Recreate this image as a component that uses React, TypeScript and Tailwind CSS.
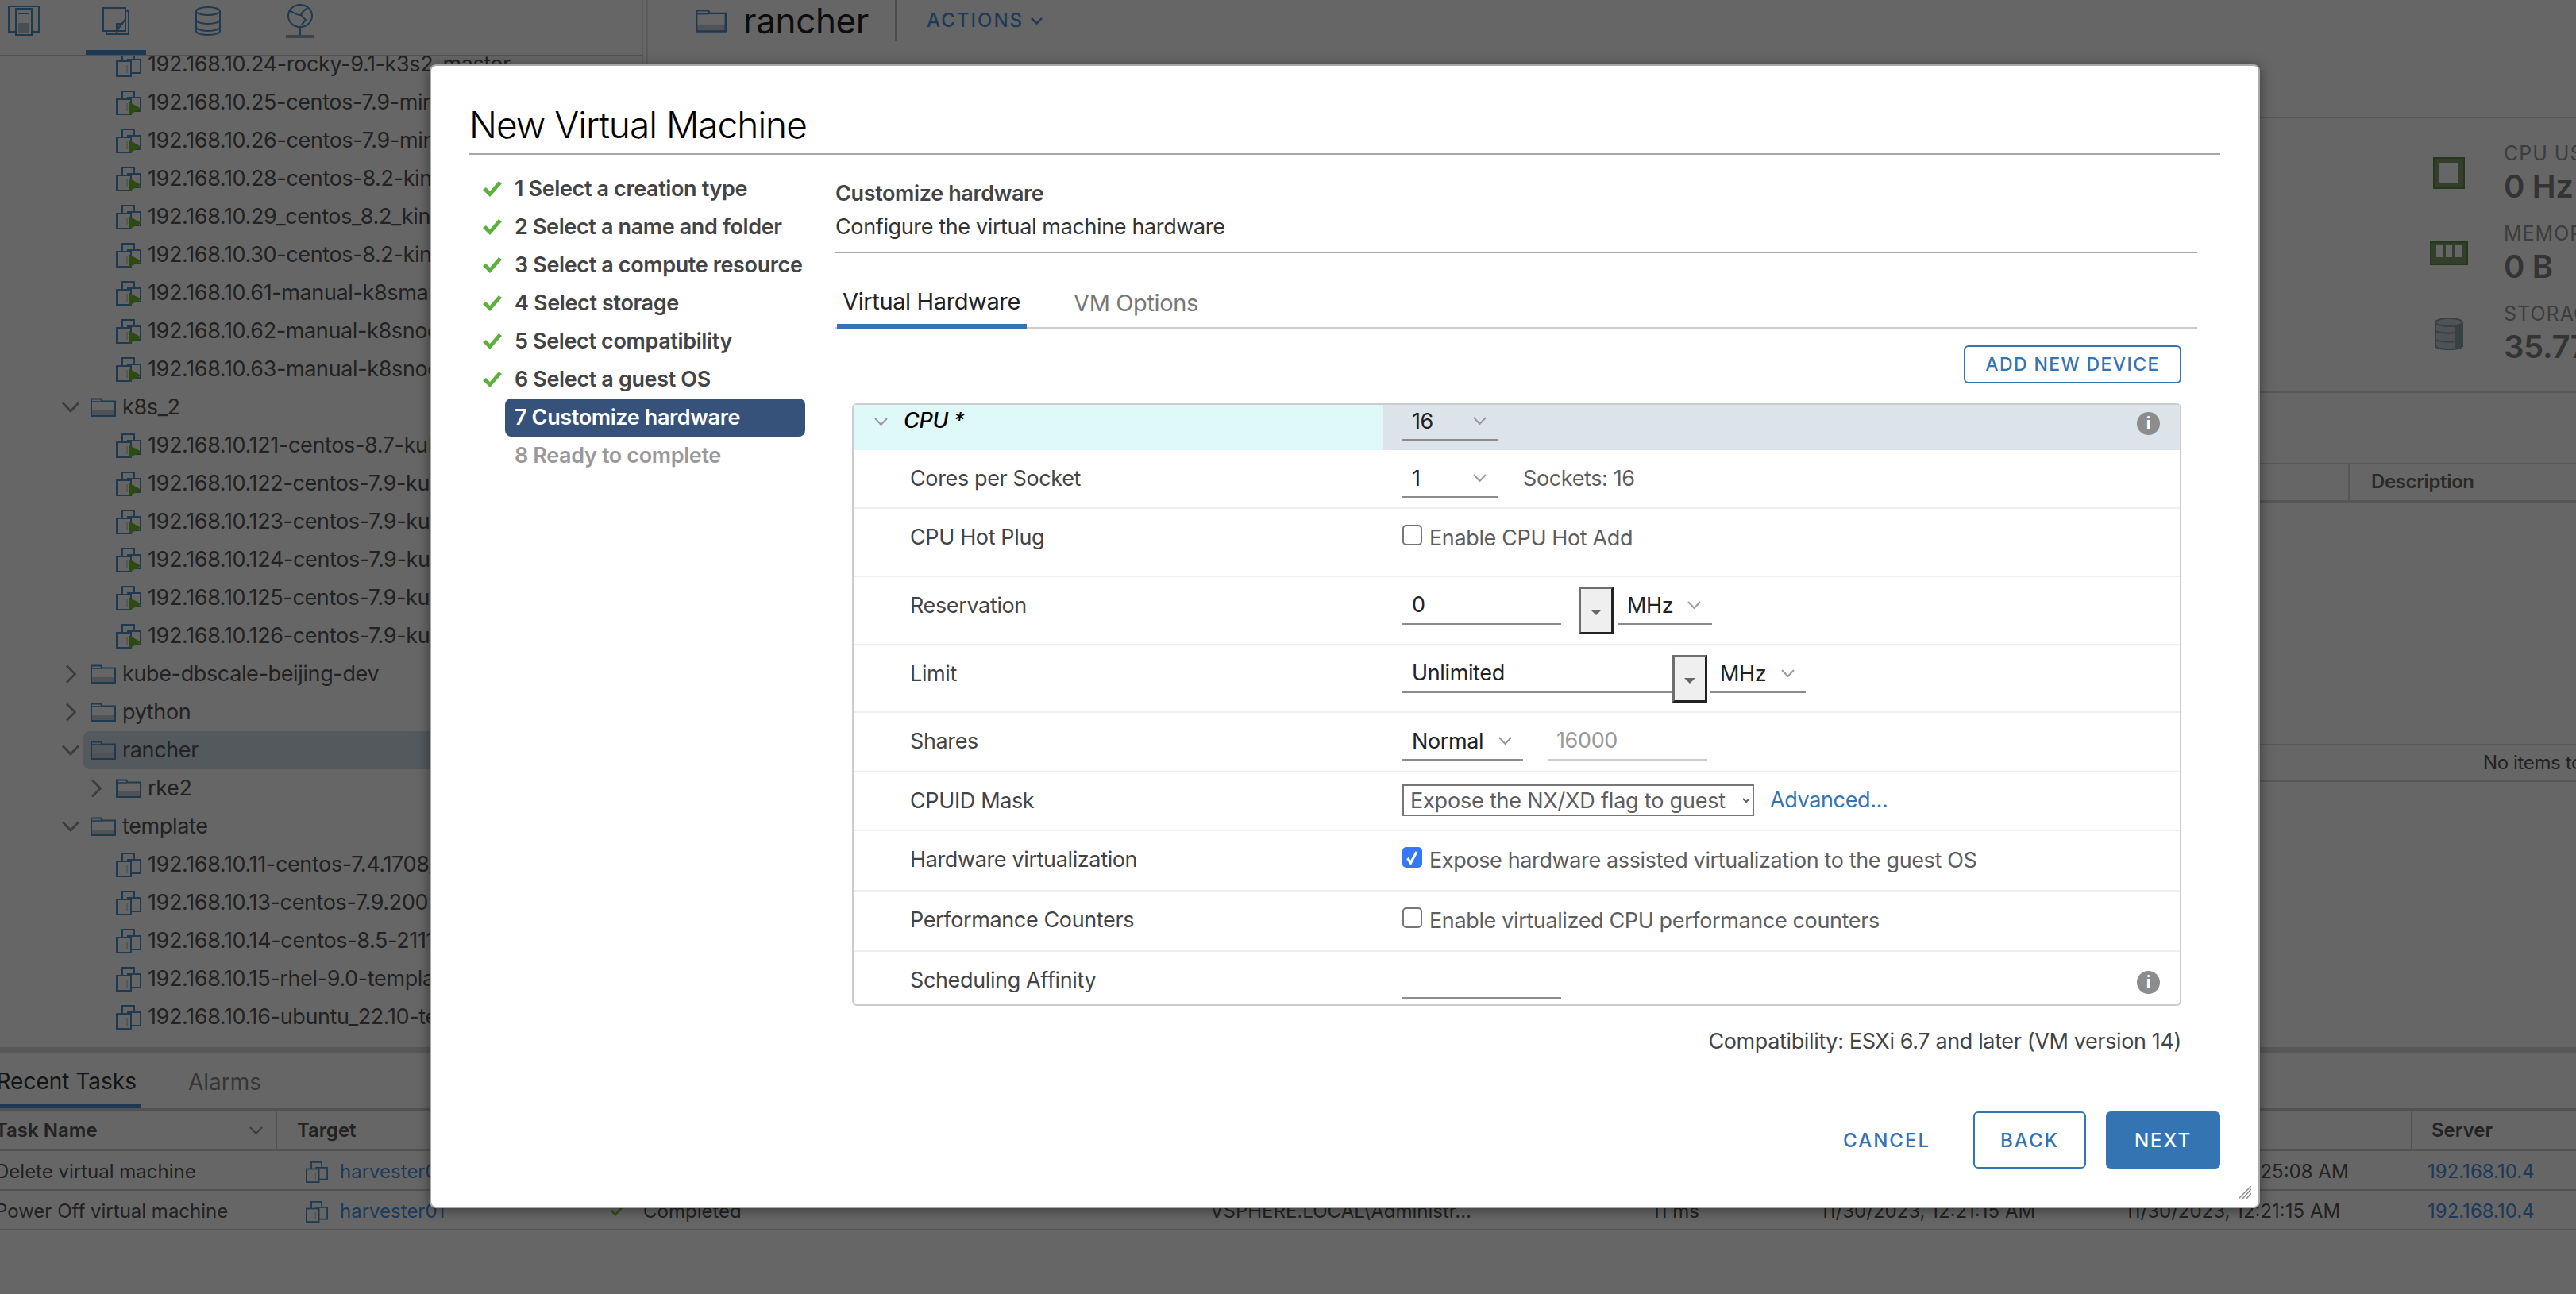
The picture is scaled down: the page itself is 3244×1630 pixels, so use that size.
import React from 'react';

const Chevron: React.FC<{ dir: 'down' | 'right'; className?: string }> = ({ dir, className = 'stroke-[#999]' }) =>
  dir === 'down' ? (
    <svg width="22" height="14" viewBox="0 0 22 14" fill="none" className={className} strokeWidth="3">
      <path d="M1 1.5 11 12 21 1.5" />
    </svg>
  ) : (
    <svg width="14" height="24" viewBox="0 0 14 24" fill="none" className={className} strokeWidth="3">
      <path d="M2 1.5 12.5 12 2 22.5" />
    </svg>
  );

const SmallChevron: React.FC = () => (
  <svg width="17" height="10" viewBox="0 0 17 10" fill="none" stroke="#999" strokeWidth="2">
    <path d="M1 1 8.5 9 16 1" />
  </svg>
);

const VmIcon: React.FC<{ on?: boolean; size?: number }> = ({ on, size = 32 }) => (
  <svg width={size} height={size} viewBox="0 0 32 32" fill="none" stroke="#4e8fc6" strokeWidth="2" className="shrink-0">
    <path d="M8 12V2h15v8" />
    <rect x="1" y="12" width="18" height="19" />
    <path d="M14 10h17v17H19" />
    <path d="M14 17v10" strokeWidth="1" stroke="#9fb6c8" />
    {on && <path d="M16 15 32 24 16 32Z" fill="#6fb82e" stroke="none" />}
  </svg>
);

const FolderIcon: React.FC<{ w?: number; h?: number }> = ({ w = 32, h = 24 }) => (
  <svg width={w} height={h} viewBox="0 0 32 24" fill="none" className="shrink-0">
    <rect x="1" y="16" width="30" height="7" fill="#c6d0d9" />
    <path d="M1 23V1.5h12l1.5 3H31V23Z" stroke="#4e8fc6" strokeWidth="2" />
    <path d="M1 5h13" stroke="#4e8fc6" strokeWidth="1.5" />
  </svg>
);

const TreeRow: React.FC<{ depth?: number; chevron?: 'down' | 'right'; selected?: boolean; label: string }> = ({
  depth = 0,
  chevron,
  selected,
  label,
}) => (
  <div className={`flex h-[48px] items-center ${depth === 0 ? 'pl-[73px]' : 'pl-[105px]'}`}>
    <span className="flex w-[32px] shrink-0 justify-center">{chevron && <Chevron dir={chevron} />}</span>
    <span className={`flex h-full flex-1 items-center pl-[9px] ${selected ? 'rounded-l-[8px] bg-[#d2deeb]' : ''}`}>
      <FolderIcon />
      <span className="ml-[8px] whitespace-nowrap">{label}</span>
    </span>
  </div>
);

const VmRow: React.FC<{ label: string; on?: boolean }> = ({ label, on }) => (
  <div className="flex h-[48px] items-center pl-[146px]">
    <VmIcon on={on} />
    <span className="ml-[8px] whitespace-nowrap">{label}</span>
  </div>
);

const firstVms = [
  '192.168.10.25-centos-7.9-minimal',
  '192.168.10.26-centos-7.9-minimal',
  '192.168.10.28-centos-8.2-kind-node',
  '192.168.10.29_centos_8.2_kind_node',
  '192.168.10.30-centos-8.2-kind-node',
  '192.168.10.61-manual-k8smaster-node',
  '192.168.10.62-manual-k8snode-node',
  '192.168.10.63-manual-k8snode-node',
];

const k8sVms = [
  '192.168.10.121-centos-8.7-kube-node',
  '192.168.10.122-centos-7.9-kube-node',
  '192.168.10.123-centos-7.9-kube-node',
  '192.168.10.124-centos-7.9-kube-node',
  '192.168.10.125-centos-7.9-kube-node',
  '192.168.10.126-centos-7.9-kube-node',
];

const templates = [
  '192.168.10.11-centos-7.4.1708_template',
  '192.168.10.13-centos-7.9.2009-template',
  '192.168.10.14-centos-8.5-2111-template',
  '192.168.10.15-rhel-9.0-template-node',
  '192.168.10.16-ubuntu_22.10-template',
];

const NavTabs: React.FC = () => (
  <div className="-ml-[28px] flex h-[71px] w-[836px] border-b-2 border-[#c8c8c8]">
    <div className="flex h-[69px] w-[116px] items-start justify-center pt-[7px]">
      <svg width="40" height="38" viewBox="0 0 40 38" fill="none" stroke="#4e8fc6" strokeWidth="2">
        <path d="M10 33H1V1h38v32h-9" />
        <rect x="10" y="4" width="20" height="33" />
        <rect x="13" y="22" width="14" height="13" fill="#b8c4ce" stroke="none" />
        <path d="M13 10h14" />
      </svg>
    </div>
    <div className="flex h-[69px] w-[116px] justify-center">
      <div className="flex h-[69px] w-[76px] justify-center border-b-[6px] border-[#4a8fd8] pt-[9px]">
        <svg width="34" height="35" viewBox="0 0 34 35" fill="none" stroke="#4e8fc6" strokeWidth="2">
          <path d="M1 1h28v29H1Z" />
          <path d="M29 5h4v29H5v-4" />
          <path d="M29 15 18 30v-9h8" fill="#b8c4ce" />
        </svg>
      </div>
    </div>
    <div className="flex h-[69px] w-[116px] justify-center pt-[8px]">
      <svg width="32" height="37" viewBox="0 0 32 37" fill="none" stroke="#4e8fc6" strokeWidth="2">
        <ellipse cx="16" cy="6" rx="15" ry="5" />
        <path d="M1 6v25c0 3 7 5 15 5s15-2 15-5V6" />
        <path d="M1 17c0 3 7 5 15 5s15-2 15-5M1 26c0 3 7 5 15 5s15-2 15-5" />
      </svg>
    </div>
    <div className="flex h-[69px] w-[116px] justify-center pt-[5px]">
      <svg width="36" height="44" viewBox="0 0 36 44" fill="none" stroke="#4e8fc6" strokeWidth="2">
        <ellipse cx="18" cy="15" rx="15" ry="14" />
        <path d="M5 9c5 1 8 6 14 5l6 6-5 6M27 5c-3 3-7 4-8 9" />
        <path d="M18 30v9" />
        <rect x="0" y="39" width="36" height="4" fill="#93a9bb" stroke="none" />
      </svg>
    </div>
  </div>
);

const stats = [
  { label: 'CPU USAGE', value: '0 Hz' },
  { label: 'MEMORY USAGE', value: '0 B' },
  { label: 'STORAGE USAGE', value: '35.77 TB' },
];

const StatIcon: React.FC<{ kind: number }> = ({ kind }) => {
  if (kind === 0)
    return (
      <svg width="40" height="40" viewBox="0 0 40 40">
        <rect x="1" y="1" width="38" height="38" fill="#7f9e6d" stroke="#5f8a48" strokeWidth="2" />
        <rect x="8" y="7" width="24" height="25" fill="#fff" />
      </svg>
    );
  if (kind === 1)
    return (
      <svg width="48" height="30" viewBox="0 0 48 30">
        <rect x="1" y="1" width="46" height="28" fill="#7f9e6d" stroke="#5f8a48" strokeWidth="2" />
        <rect x="8" y="5" width="8" height="15" fill="#fff" />
        <rect x="20" y="5" width="8" height="15" fill="#fff" />
        <rect x="32" y="5" width="8" height="15" fill="#fff" />
      </svg>
    );
  return (
    <svg width="36" height="41" viewBox="0 0 36 41" fill="none" stroke="#8ba0ad" strokeWidth="2">
      <path d="M1 6v29c0 3 7 5 17 5s17-2 17-5V6" fill="#c7d0d6" />
      <path d="M26 10h9v26l-9 3Z" fill="#8ba0ad" />
      <ellipse cx="18" cy="6" rx="17" ry="5" fill="#c7d0d6" />
      <path d="M1 17c4 3 20 3 25 2M1 28c4 3 20 3 25 2" />
    </svg>
  );
};

const UnderSelect: React.FC<{ value: string; box: string }> = ({ value, box }) => (
  <div className={`flex h-[45px] shrink-0 items-start justify-between border-b-2 border-[#8c8c8c] pl-[12px] pr-[14px] text-[#222] ${box}`}>
    <span className="mt-[1px]">{value}</span>
    <span className="flex h-[40px] items-center">
      <SmallChevron />
    </span>
  </div>
);

const UnderInput: React.FC<{ value?: string; box: string }> = ({ value, box }) => (
  <div className={`h-[45px] shrink-0 border-b-2 border-[#8c8c8c] pl-[12px] text-[#222] ${box}`}>{value}</div>
);

const Spinner: React.FC<{ box?: string }> = ({ box = '' }) => (
  <button className={`-mt-[3px] flex h-[60px] w-[44px] shrink-0 items-center justify-center border-[3px] border-t-[#6e6e6e] border-l-[#6e6e6e] border-r-[#222] border-b-[#222] bg-[#efefef] ${box}`}>
    <span className="mt-[4px] h-0 w-0 border-x-[7px] border-t-[7px] border-x-transparent border-t-[#666]" />
  </button>
);

const Check: React.FC<{ checked?: boolean; label: string }> = ({ checked, label }) => (
  <div className="flex items-start text-[#5e5e5e]">
    {checked ? (
      <span className="mt-[5px] flex h-[26px] w-[25px] shrink-0 items-center justify-center rounded-[5px] bg-[#3478f6]">
        <svg width="15" height="18" viewBox="0 0 15 18" fill="none" stroke="#fff" strokeWidth="3.2">
          <path d="M1.5 10 5.5 16 13 2" />
        </svg>
      </span>
    ) : (
      <span className="mt-[5px] h-[26px] w-[25px] shrink-0 rounded-[5px] border-2 border-[#767676] bg-white" />
    )}
    <span className="ml-[9px] mt-[2px]">{label}</span>
  </div>
);

const Info: React.FC<{ box: string }> = ({ box }) => (
  <span className={`ml-auto mr-[25px] flex h-[29px] w-[29px] shrink-0 items-center justify-center rounded-full bg-[#8c8c8c] text-[21px] font-bold leading-none text-white ${box}`}>
    i
  </span>
);

const Row: React.FC<{ label: string; h: string; last?: boolean; children?: React.ReactNode }> = ({ label, h, last, children }) => (
  <div className={`flex ${h} ${last ? '' : 'border-b-2 border-[#eee]'}`}>
    <div className="h-[56px] w-[667px] shrink-0 pl-[71px] pt-[16px] text-[#444]">{label}</div>
    <div className="flex flex-1 items-start pl-[24px] pt-[15px]">{children}</div>
  </div>
);

const steps = [
  '1 Select a creation type',
  '2 Select a name and folder',
  '3 Select a compute resource',
  '4 Select storage',
  '5 Select compatibility',
  '6 Select a guest OS',
];

const Wizard: React.FC = () => (
  <div className="absolute left-[541px] top-[81px] flex h-[1441px] w-[2305px] flex-col rounded-[8px] border-2 border-[#a8a8a8] bg-white pb-[48px] pl-[48px] pr-[48px] shadow-[0_2px_16px_rgba(0,0,0,0.45)]">
    <div className="flex h-[112px] items-end border-b-2 border-[#a6a6a6] pb-[6px] text-[46px] font-light leading-[60px] tracking-[-1px] text-black">
      New Virtual Machine
    </div>

    <div className="flex flex-1">
      <div className="w-[461px] shrink-0 pt-[19px] font-semibold text-[#444]">
        {steps.map(s => (
          <div key={s} className="flex h-[48px] items-center pl-[17px]">
            <svg width="24" height="20" viewBox="0 0 24 20" className="shrink-0">
              <path d="M0 11l4-3 5 5L20 0l4 3L9 20Z" fill="#5cb03c" />
            </svg>
            <span className="ml-[16px]">{s}</span>
          </div>
        ))}
        <div className="ml-[45px] flex h-[48px] w-[378px] items-center rounded-[8px] bg-[#36527b] pl-[12px] text-white">7 Customize hardware</div>
        <div className="ml-[45px] flex h-[48px] items-center pl-[12px] text-[#999]">8 Ready to complete</div>
      </div>

      <div className="flex-1 pr-[29px] pt-[29px]">
        <div className="h-[42px] font-semibold text-[#444]">Customize hardware</div>
        <div className="h-[42px] text-[#333]">Configure the virtual machine hardware</div>
        <div className="mt-[9px] h-[2px] bg-[#a6a6a6]" />

        <div className="mt-[31px] flex h-[64px] border-b-2 border-[#ccc]">
          <div className="ml-[2px] flex h-[64px] w-[239px] items-center whitespace-nowrap border-b-[6px] border-[#3574b3] pl-[7px] pt-[2px] text-[29px] text-[#222]">Virtual Hardware</div>
          <div className="ml-[59px] flex h-[62px] items-center pt-[2px] text-[29px] text-[#777]">VM Options</div>
        </div>

        <div className="mt-[21px] flex justify-end pr-[20px]">
          <button className="flex h-[48px] w-[274px] items-center justify-center rounded-[6px] border-2 border-[#3574b3] text-[23px] font-medium tracking-[1.4px] text-[#3574b3]">
            ADD NEW DEVICE
          </button>
        </div>

        <div className="ml-[21px] mr-[20px] mt-[25px] h-[759px] rounded-[6px] border-2 border-[#ccc]">
          <div className="flex h-[57px]">
            <div className="flex w-[667px] shrink-0 items-start bg-[#dff8f8]">
              <span className="ml-[26px] mt-[16px]">
                <SmallChevron />
              </span>
              <span className="ml-[20px] font-medium italic text-black">CPU *</span>
            </div>
            <div className="flex flex-1 items-start bg-[#dce3e9] pl-[24px]">
              <UnderSelect value="16" box="w-[120px]" />
              <Info box="mt-[9px]" />
            </div>
          </div>
          <Row label="Cores per Socket" h="h-[74px]">
            <UnderSelect value="1" box="w-[120px]" />
            <span className="ml-[32px] mt-[1px] text-[#5e5e5e]">Sockets: 16</span>
          </Row>
          <Row label="CPU Hot Plug" h="h-[86px]">
            <Check label="Enable CPU Hot Add" />
          </Row>
          <Row label="Reservation" h="h-[86px]">
            <UnderInput value="0" box="w-[200px]" />
            <Spinner box="ml-[22px]" />
            <UnderSelect value="MHz" box="ml-[5px] w-[119px]" />
          </Row>
          <Row label="Limit" h="h-[85px]">
            <UnderInput value="Unlimited" box="w-[340px]" />
            <Spinner />
            <UnderSelect value="MHz" box="ml-[4px] w-[120px]" />
          </Row>
          <Row label="Shares" h="h-[75px]">
            <UnderSelect value="Normal" box="w-[152px]" />
            <div className="ml-[32px] h-[45px] w-[200px] border-b-2 border-[#ccc] pl-[10px] text-[#999]">16000</div>
          </Row>
          <Row label="CPUID Mask" h="h-[74px]">
            <select defaultValue="nx" className="h-[40px] w-[443px] border-2 border-[#767676] bg-white pl-[4px] tracking-[-0.2px] text-[#5e5e5e]">
              <option value="nx">Expose the NX/XD flag to guest</option>
            </select>
            <a className="ml-[20px] text-[#3574b3]">Advanced...</a>
          </Row>
          <Row label="Hardware virtualization" h="h-[76px]">
            <Check checked label="Expose hardware assisted virtualization to the guest OS" />
          </Row>
          <Row label="Performance Counters" h="h-[76px]">
            <Check label="Enable virtualized CPU performance counters" />
          </Row>
          <Row label="Scheduling Affinity" h="h-[66px]" last>
            <div className="h-[44px] w-[200px] border-b-2 border-[#8c8c8c]" />
            <Info box="mt-[9px]" />
          </Row>
        </div>

        <div className="mt-[25px] pr-[20px] text-right text-[#444]">Compatibility: ESXi 6.7 and later (VM version 14)</div>
      </div>
    </div>

    <div className="relative flex justify-end text-[24px] font-medium tracking-[2px]">
      <button className="mr-[54px] h-[72px] pt-[2px] text-[#3574b3]">CANCEL</button>
      <button className="h-[72px] w-[142px] rounded-[6px] border-2 border-[#3574b3] pt-[2px] text-[#3574b3]">BACK</button>
      <button className="ml-[25px] h-[72px] w-[144px] rounded-[6px] bg-[#3574b3] pt-[2px] text-white">NEXT</button>
    </div>
    <svg width="16" height="16" viewBox="0 0 16 16" className="absolute bottom-[10px] right-[9px]" stroke="#8c8c8c" strokeWidth="1.5">
      <path d="M0 16 16 0M5 16 16 4M10 16l6-7" />
    </svg>
  </div>
);

const TaskRow: React.FC<{ name: string; target: string; completed?: boolean }> = ({ name, target, completed }) => (
  <div className="flex h-[50px] items-center border-b-2 border-[#ccc] pt-[3px] text-[24px] tracking-normal">
    <div className="w-[385px] shrink-0 whitespace-nowrap">
      <span className="-ml-[6px] inline-block">{name}</span>
    </div>
    <VmIcon size={28} />
    <span className="ml-[15px] w-[341px] shrink-0 text-[#4b91dc]">{target}</span>
    <svg width="16" height="13" viewBox="0 0 16 13" fill="none" stroke="#7fcf3a" strokeWidth="3" className="shrink-0">
      <path d="M1 6l5 5 9-10" />
    </svg>
    <span className="ml-[25px] w-[714px] shrink-0">{completed ? 'Completed' : ''}</span>
    <span className="w-[556px] shrink-0 whitespace-nowrap">VSPHERE.LOCAL\Administr...</span>
    <span className="w-[212px] shrink-0">11 ms</span>
    <span className="w-[384px] shrink-0 whitespace-nowrap">11/30/2023, 12:21:15 AM</span>
    <span className="w-[381px] shrink-0 whitespace-nowrap">11/30/2023, 12:{completed ? '21:15' : '25:08'} AM</span>
    <span className="text-[#4b91dc]">192.168.10.4</span>
  </div>
);

const App: React.FC = () => {
  return (
    <div className="relative h-[1630px] w-[3244px] overflow-hidden bg-white text-[27px] leading-[40px] tracking-[-0.37px] text-[#565656] [font-family:Inter,'Liberation_Sans',sans-serif]">
      <div className="flex h-[1319px]">
        <div className="w-[808px] shrink-0 overflow-hidden">
          <NavTabs />
          <div className="-mt-[14px] [clip-path:inset(14px_0_0_0)]">
            <VmRow label="192.168.10.24-rocky-9.1-k3s2-master" />
            {firstVms.map(v => (
              <VmRow key={v} label={v} on />
            ))}
            <TreeRow chevron="down" label="k8s_2" />
            {k8sVms.map(v => (
              <VmRow key={v} label={v} on />
            ))}
            <TreeRow chevron="right" label="kube-dbscale-beijing-dev" />
            <TreeRow chevron="right" label="python" />
            <TreeRow chevron="down" selected label="rancher" />
            <TreeRow depth={1} chevron="right" label="rke2" />
            <TreeRow chevron="down" label="template" />
            {templates.map(v => (
              <VmRow key={v} label={v} />
            ))}
          </div>
        </div>
        <div className="w-[8px] shrink-0 border-x-2 border-[#e4e4e4]" />

        <div className="min-w-0 flex-1">
          <div className="h-[149px] border-b-2 border-[#d8d8d8]">
            <div className="flex h-[52px] items-center pl-[60px]">
              <FolderIcon w={39} h={30} />
              <span className="ml-[21px] text-[44px] text-[#222]">rancher</span>
              <span className="ml-[33px] h-[52px] w-[2px] bg-[#bbb]" />
              <span className="ml-[38px] text-[24px] font-medium tracking-[2px] text-[#4b91dc]">ACTIONS</span>
              <svg width="15" height="9" viewBox="0 0 15 9" fill="none" stroke="#4b91dc" strokeWidth="2.5" className="ml-[9px]">
                <path d="M1 1l6.5 6.5L14 1" />
              </svg>
            </div>
          </div>
          <div className="h-[346px] border-b-2 border-[#d8d8d8] pt-[24px]">
            {stats.map((s, i) => (
              <div key={s.label} className="flex h-[101px] pl-[2240px]">
                <div className="flex h-[90px] w-[97px] shrink-0 items-center pl-[4px]">
                  <div className="flex w-[48px] justify-center">
                    <StatIcon kind={i} />
                  </div>
                </div>
                <div className="whitespace-nowrap">
                  <div className="text-[25px] tracking-[1px] text-[#999]">{s.label}</div>
                  <div className="text-[40px] font-semibold leading-[44px] text-[#828282]">{s.value}</div>
                </div>
              </div>
            ))}
          </div>
          <div className="mt-[88px] flex h-[51px] justify-end border-y-2 border-b-[4px] border-[#d8d8d8]">
            <div className="w-[287px] border-l-2 border-[#d8d8d8] pl-[27px] text-[24px] font-semibold leading-[44px] text-[#696969]">Description</div>
          </div>
          <div className="mt-[303px] h-[48px] whitespace-nowrap border-y-2 border-[#d8d8d8] pl-[2311px] text-[24px] leading-[44px]">No items to display</div>
        </div>
      </div>

      <div className="h-[7px] bg-[#d9d9d9]" />
      <div className="flex h-[73px] items-end border-b-[3px] border-[#ccc] text-[28px] tracking-normal">
        <div className="flex h-[70px] w-[178px] items-center justify-end border-b-[5px] border-[#4a8fd8] pr-[6px] pt-[6px] text-[#333]">
          <span className="whitespace-nowrap">Recent Tasks</span>
        </div>
        <div className="ml-[59px] flex h-[70px] items-center pt-[3px] text-[#888]">Alarms</div>
      </div>
      <div className="flex h-[51px] items-center border-b-[3px] border-[#ccc] text-[24px] font-semibold tracking-normal text-[#565656]">
        <div className="flex h-full w-[349px] items-center justify-between border-r-2 border-[#ccc] pr-[16px] pt-[2px]">
          <span className="-ml-[6px] whitespace-nowrap">Task Name</span>
          <SmallChevron />
        </div>
        <div className="w-[2663px] pl-[25px] pt-[2px]">Target</div>
        <div className="flex h-full w-[24px] items-center" />
        <div className="flex h-full flex-1 items-center border-l-2 border-[#ccc] pl-[24px] pt-[2px]">Server</div>
      </div>
      <TaskRow name="Delete virtual machine" target="harvester01" />
      <TaskRow name="Power Off virtual machine" target="harvester01" completed />

      <div className="absolute inset-0 bg-black/60" />
      <Wizard />
    </div>
  );
};

export default App;
